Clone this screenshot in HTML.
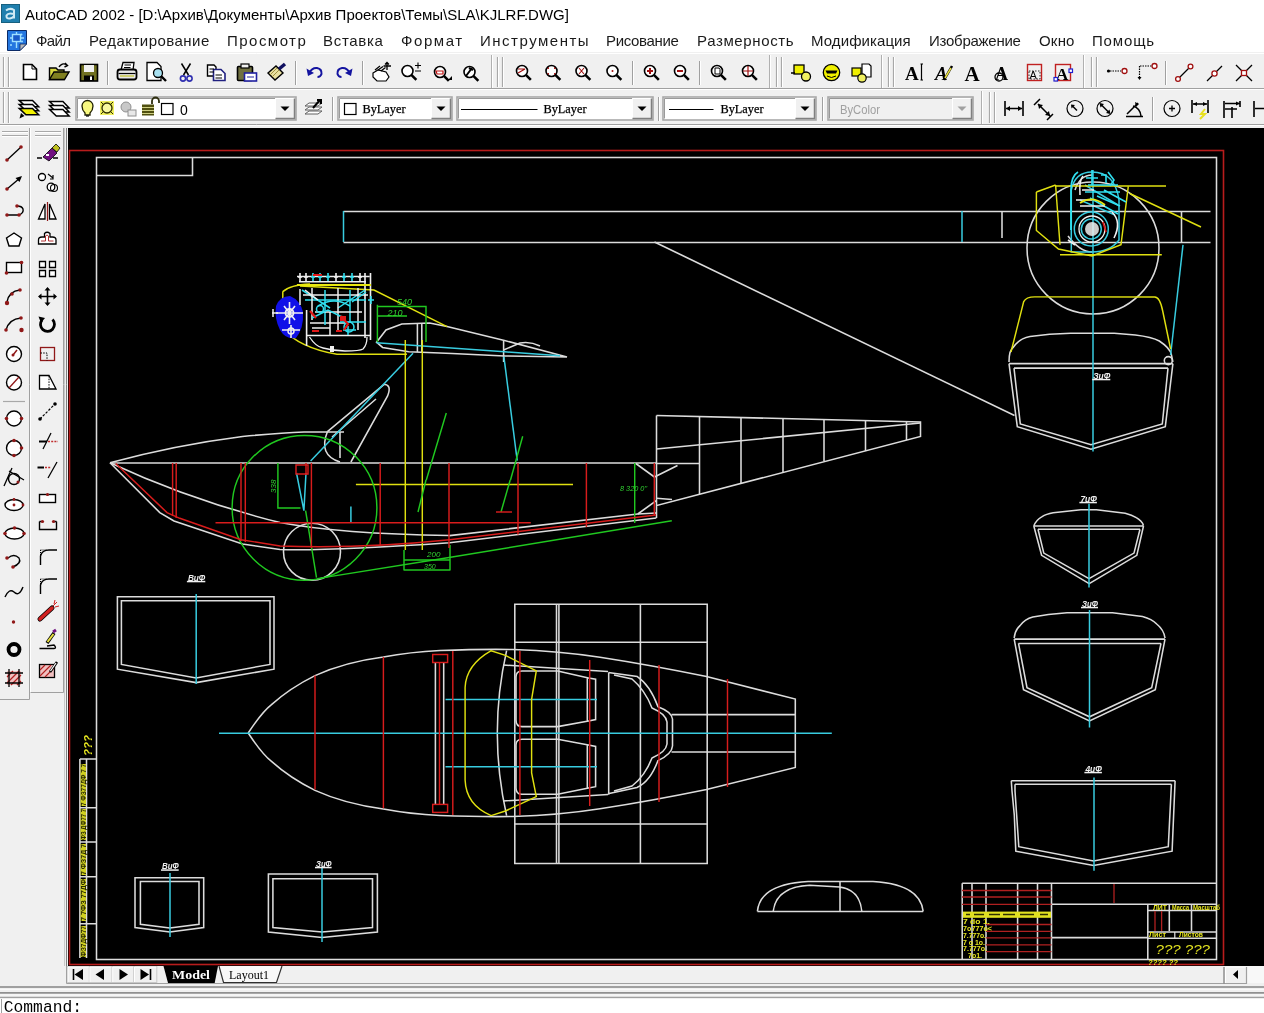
<!DOCTYPE html>
<html><head><meta charset="utf-8">
<style>
html,body{margin:0;padding:0;width:1264px;height:1013px;overflow:hidden;background:#f0f0f0;font-family:"Liberation Sans",sans-serif;position:relative;}
.a{position:absolute;}
svg{will-change:transform;}
#title{left:0;top:0;width:1264px;height:28px;background:#fff;}
#menu{left:0;top:28px;width:1264px;height:24px;background:#fff;}
#draw{left:68px;top:128px;width:1196px;height:838px;background:#000;}
#cmd{left:0;top:998px;width:1264px;height:15px;background:#fff;}
.ttl{font-size:15px;color:#000;white-space:nowrap;will-change:transform;}
.mn{font-size:15px;color:#1a1a1a;white-space:nowrap;will-change:transform;}
</style></head><body>
<div id="title" class="a">
  <svg class="a" style="left:1px;top:4px" width="19" height="19" viewBox="0 0 19 19"><rect x="0.5" y="0.5" width="18" height="18" fill="#1f7fae" stroke="#17607f" stroke-width="1"/><path d="M5 6.5 Q9 3.5 13 6 V14.5 M13 10 Q7 8.5 5.5 11.5 Q5 15 9 14.5 Q12 14 13 12" fill="none" stroke="#cfeaf5" stroke-width="2"/></svg>
  <div class="a ttl" style="left:25px;top:6px;">AutoCAD 2002 - [D:\Архив\Документы\Архив Проектов\Темы\SLA\KJLRF.DWG]</div>
</div>
<div id="menu" class="a">
  <svg class="a" style="left:7px;top:2px" width="20" height="21" viewBox="0 0 20 21"><path d="M0.5 0.5 H19.5 V14 L13 20.5 H0.5 Z" fill="#2477e0" stroke="#0b2a66" stroke-width="1"/><path d="M13 20.5 V14 H19.5 Z" fill="#b8b8b8" stroke="#0b2a66" stroke-width="0.8"/><path d="M3 8 H17 M9.5 2 V18" stroke="#9fe0ff" stroke-width="1.4"/><rect x="5.5" y="4.5" width="8" height="7" fill="#1a5ac8" stroke="#9fe0ff" stroke-width="1.4"/><circle cx="14.5" cy="4.5" r="1" fill="#9fe0ff"/><circle cx="4" cy="15" r="1" fill="#9fe0ff"/><circle cx="15" cy="11.5" r="1" fill="#9fe0ff"/></svg>
  <div class="a mn" style="left:36px;top:4px;letter-spacing:-0.6px;">Файл</div>
  <div class="a mn" style="left:89px;top:4px;letter-spacing:0.46px;">Редактирование</div>
  <div class="a mn" style="left:227px;top:4px;letter-spacing:1.47px;">Просмотр</div>
  <div class="a mn" style="left:323px;top:4px;letter-spacing:0.7px;">Вставка</div>
  <div class="a mn" style="left:401px;top:4px;letter-spacing:1.58px;">Формат</div>
  <div class="a mn" style="left:480px;top:4px;letter-spacing:1.51px;">Инструменты</div>
  <div class="a mn" style="left:606px;top:4px;letter-spacing:-0.34px;">Рисование</div>
  <div class="a mn" style="left:697px;top:4px;letter-spacing:0.62px;">Размерность</div>
  <div class="a mn" style="left:811px;top:4px;letter-spacing:0.08px;">Модификация</div>
  <div class="a mn" style="left:929px;top:4px;letter-spacing:-0.26px;">Изображение</div>
  <div class="a mn" style="left:1039px;top:4px;letter-spacing:0.2px;">Окно</div>
  <div class="a mn" style="left:1092px;top:4px;letter-spacing:0.84px;">Помощь</div>
</div>
<div class="a" style="left:0;top:52px;width:1264px;height:1px;background:#d8d8d8;"></div>
<svg class="a" style="left:0px;top:52px" width="1264" height="76" viewBox="0 52 1264 76">
<rect x="0" y="52" width="1264" height="76" fill="#f0f0f0"/>
<path d="M0 53.5 H1264" stroke="#ffffff" stroke-width="1"/>
<path d="M0 88.5 H1264" stroke="#a0a0a0" stroke-width="1"/>
<path d="M0 89.5 H1264" stroke="#ffffff" stroke-width="1"/>
<path d="M0 124.5 H1264" stroke="#a0a0a0" stroke-width="1"/>
<path d="M0 125.5 H1264" stroke="#ffffff" stroke-width="1"/>
<path d="M3.5 57 V87 M8.5 57 V87" stroke="#a8a8a8" stroke-width="1.2"/><path d="M4.5 57 V87 M9.5 57 V87" stroke="#ffffff" stroke-width="1"/>
<path d="M497.5 57 V87 M502.5 57 V87" stroke="#a8a8a8" stroke-width="1.2"/><path d="M498.5 57 V87 M503.5 57 V87" stroke="#ffffff" stroke-width="1"/>
<path d="M776.5 57 V87 M781.5 57 V87" stroke="#a8a8a8" stroke-width="1.2"/><path d="M777.5 57 V87 M782.5 57 V87" stroke="#ffffff" stroke-width="1"/>
<path d="M888.5 57 V87 M893.5 57 V87" stroke="#a8a8a8" stroke-width="1.2"/><path d="M889.5 57 V87 M894.5 57 V87" stroke="#ffffff" stroke-width="1"/>
<path d="M1091.5 57 V87 M1096.5 57 V87" stroke="#a8a8a8" stroke-width="1.2"/><path d="M1092.5 57 V87 M1097.5 57 V87" stroke="#ffffff" stroke-width="1"/>
<path d="M491.5 55 V88" stroke="#b0b0b0" stroke-width="1"/><path d="M492.5 55 V88" stroke="#ffffff" stroke-width="1"/>
<path d="M769.5 55 V88" stroke="#b0b0b0" stroke-width="1"/><path d="M770.5 55 V88" stroke="#ffffff" stroke-width="1"/>
<path d="M881.5 55 V88" stroke="#b0b0b0" stroke-width="1"/><path d="M882.5 55 V88" stroke="#ffffff" stroke-width="1"/>
<path d="M1083.5 55 V88" stroke="#b0b0b0" stroke-width="1"/><path d="M1084.5 55 V88" stroke="#ffffff" stroke-width="1"/>
<path d="M107.5 61 V85" stroke="#a0a0a0" stroke-width="1"/><path d="M108.5 61 V85" stroke="#ffffff" stroke-width="1"/>
<path d="M295.5 61 V85" stroke="#a0a0a0" stroke-width="1"/><path d="M296.5 61 V85" stroke="#ffffff" stroke-width="1"/>
<path d="M362.5 61 V85" stroke="#a0a0a0" stroke-width="1"/><path d="M363.5 61 V85" stroke="#ffffff" stroke-width="1"/>
<path d="M632.5 61 V85" stroke="#a0a0a0" stroke-width="1"/><path d="M633.5 61 V85" stroke="#ffffff" stroke-width="1"/>
<path d="M699.5 61 V85" stroke="#a0a0a0" stroke-width="1"/><path d="M700.5 61 V85" stroke="#ffffff" stroke-width="1"/>
<path d="M1165.5 61 V85" stroke="#a0a0a0" stroke-width="1"/><path d="M1166.5 61 V85" stroke="#ffffff" stroke-width="1"/>
<path d="M3.5 92 V123 M8.5 92 V123" stroke="#a8a8a8" stroke-width="1.2"/><path d="M4.5 92 V123 M9.5 92 V123" stroke="#ffffff" stroke-width="1"/>
<path d="M989.5 92 V123 M994.5 92 V123" stroke="#a8a8a8" stroke-width="1.2"/><path d="M990.5 92 V123 M995.5 92 V123" stroke="#ffffff" stroke-width="1"/>
<path d="M981.5 91 V124" stroke="#b0b0b0" stroke-width="1"/><path d="M982.5 91 V124" stroke="#ffffff" stroke-width="1"/>
<path d="M332.5 97 V121" stroke="#a0a0a0" stroke-width="1"/><path d="M333.5 97 V121" stroke="#ffffff" stroke-width="1"/>
<path d="M658.5 97 V121" stroke="#a0a0a0" stroke-width="1"/><path d="M659.5 97 V121" stroke="#ffffff" stroke-width="1"/>
<path d="M822.5 97 V121" stroke="#a0a0a0" stroke-width="1"/><path d="M823.5 97 V121" stroke="#ffffff" stroke-width="1"/>
<path d="M1152.5 97 V121" stroke="#a0a0a0" stroke-width="1"/><path d="M1153.5 97 V121" stroke="#ffffff" stroke-width="1"/>
<path d="M23.5 64.5 H32 L36.5 69 V79.5 H23.5 Z" fill="#fff" stroke="#000" stroke-width="1.6"/><path d="M32 64.5 V69 H36.5" fill="none" stroke="#000" stroke-width="1"/>
<path d="M49.5 68 H56 L58 70 H64 V79.5 H49.5 Z" fill="#d8d840" stroke="#000" stroke-width="1.4"/><path d="M49.5 79.5 L54 72 H69 L64.5 79.5 Z" fill="#808020" stroke="#000" stroke-width="1.4"/><path d="M59 67 Q62 62 67 65 M65 63 L67.5 65.5 L64.5 67" fill="none" stroke="#000" stroke-width="1.4"/>
<rect x="80.5" y="64.5" width="17" height="16.5" fill="#707020" stroke="#000" stroke-width="1.6"/><rect x="84" y="65" width="10" height="7" fill="#f0f0f0"/><rect x="84" y="75.5" width="10" height="5.5" fill="#000"/><rect x="90" y="76.5" width="2" height="3.5" fill="#fff"/>
<path d="M121 70 L123 62.5 H134 L133 70" fill="#fff" stroke="#000" stroke-width="1.3"/><path d="M124.5 65 H131 M124 67.5 H130.5" stroke="#000" stroke-width="1"/><rect x="117.5" y="69.5" width="19" height="10" rx="2.5" fill="#e8e8e8" stroke="#000" stroke-width="1.8"/><path d="M118.5 73.5 H135.5" stroke="#000" stroke-width="1.2"/><path d="M120 76 H134" stroke="#c8c840" stroke-width="1.4"/>
<path d="M147 62.5 H157 L161 66.5 V80.5 H147 Z" fill="#fff" stroke="#000" stroke-width="1.3"/><circle cx="158" cy="73" r="4.5" fill="#a8e0f0" stroke="#000" stroke-width="1.3"/><path d="M161 76 L166 81" stroke="#000" stroke-width="2.4"/>
<path d="M181.5 63.5 L188.5 75 M190.5 63.5 L183.5 75" stroke="#000" stroke-width="1.5" fill="none"/><circle cx="183" cy="78.5" r="2.6" fill="none" stroke="#3030b0" stroke-width="1.6"/><circle cx="189.5" cy="78.5" r="2.6" fill="none" stroke="#3030b0" stroke-width="1.6"/>
<path d="M207.5 65 H214 L216 67 V76 H207.5 Z" fill="#fff" stroke="#000" stroke-width="1.4"/><path d="M213.5 69.5 H221 L225 73.5 V80.5 H213.5 Z" fill="#fff" stroke="#202080" stroke-width="1.6"/><path d="M209.5 69 H214 M209.5 72 H214 M215.5 75 H222 M215.5 78 H222" stroke="#000" stroke-width="1"/>
<rect x="237.5" y="66.5" width="15" height="14" rx="1" fill="#707040" stroke="#000" stroke-width="1.6"/><rect x="241" y="64" width="8" height="4" fill="#f0f0f0" stroke="#000" stroke-width="1.2"/><rect x="244.5" y="73" width="12" height="8" fill="#fff" stroke="#2020a0" stroke-width="1.6"/><path d="M247 77 H254" stroke="#2020a0" stroke-width="1"/>
<path d="M268 73 L276 66 L283 73 L275 80 Z" fill="#e8e0a0" stroke="#000" stroke-width="1.4"/><path d="M279 69 L285 64" stroke="#101060" stroke-width="3.5"/><path d="M270 75 L277 68 M272 77 L279 70" stroke="#a09040" stroke-width="1"/>
<path d="M309 73 Q312 67.5 317 68 Q322 69 321.5 74 Q320.5 77 317.5 77" fill="none" stroke="#1414a0" stroke-width="2"/><path d="M306.5 68.5 L308 76 L314 73 Z" fill="#1414a0"/>
<path d="M350 73 Q347 67.5 342 68 Q337 69 337.5 74 Q338.5 77 341.5 77" fill="none" stroke="#1414a0" stroke-width="2"/><path d="M352.5 68.5 L351 76 L345 73 Z" fill="#1414a0"/>
<path d="M373 73 L378 70 L386 72 L389 77 L386 81 L377 81 L373 77 Z" fill="#fff" stroke="#000" stroke-width="1.2"/><path d="M375 70 L380 66 M378 70 L383 66.5 M381 71 L385.5 67.5" stroke="#000" stroke-width="1.2"/><path d="M387 62.5 V70 M383.5 66 H391 M385 64.5 L387 62.5 L389 64.5" stroke="#000" stroke-width="1.3" fill="none"/>
<circle cx="407.5" cy="71" r="5.5" fill="#fff" stroke="#000" stroke-width="1.6"/><path d="M411.35 74.85 L416.35 79.85" stroke="#000" stroke-width="2.6"/><path d="M415 65.5 H421 M418 62.5 V68.5 M415 71 H421" stroke="#000" stroke-width="1.1"/>
<circle cx="440" cy="72" r="5.5" fill="#fff" stroke="#000" stroke-width="1.6"/><path d="M443.85 75.85 L448.85 80.85" stroke="#000" stroke-width="2.6"/><path d="M436 71 H443 V74 H437 Z" fill="none" stroke="#c01010" stroke-width="1.2"/><path d="M448 80 L452 80 L452 76 Z" fill="#000"/>
<circle cx="469.5" cy="72" r="5.5" fill="#fff" stroke="#000" stroke-width="1.6"/><path d="M473.35 75.85 L478.35 80.85" stroke="#000" stroke-width="2.6"/><path d="M466 76 L472 68 M469 68 L473 70" stroke="#000" stroke-width="2"/>
<circle cx="522" cy="71" r="5.5" fill="#fff" stroke="#000" stroke-width="1.6"/><path d="M525.85 74.85 L530.85 79.85" stroke="#000" stroke-width="2.6"/><path d="M518 73 L525 69 M518 69 H525" stroke="#a01010" stroke-width="1.2"/>
<circle cx="551.5" cy="71" r="5.5" fill="#fff" stroke="#000" stroke-width="1.6"/><path d="M555.35 74.85 L560.35 79.85" stroke="#000" stroke-width="2.6"/><path d="M548 68 L549 68 M555 68 L554 68 M548 74 H549 M555 74 H554 M548 68 V69 M555 68 V69 M548 74 V73 M555 74 V73" stroke="#a01010" stroke-width="1.3"/>
<circle cx="581.5" cy="71" r="5.5" fill="#fff" stroke="#000" stroke-width="1.6"/><path d="M585.35 74.85 L590.35 79.85" stroke="#000" stroke-width="2.6"/><path d="M579 68 L584 74 M584 68 L579 74" stroke="#a01010" stroke-width="1.1"/>
<circle cx="612.5" cy="71" r="5.5" fill="#fff" stroke="#000" stroke-width="1.6"/><path d="M616.35 74.85 L621.35 79.85" stroke="#000" stroke-width="2.6"/><circle cx="612.5" cy="71" r="1" fill="#a01010"/>
<circle cx="650" cy="71" r="5.5" fill="#fff" stroke="#000" stroke-width="1.6"/><path d="M653.85 74.85 L658.85 79.85" stroke="#000" stroke-width="2.6"/><path d="M647 71 H653 M650 68 V74" stroke="#a01010" stroke-width="2"/>
<circle cx="680" cy="71" r="5.5" fill="#fff" stroke="#000" stroke-width="1.6"/><path d="M683.85 74.85 L688.85 79.85" stroke="#000" stroke-width="2.6"/><path d="M677 71 H683" stroke="#a01010" stroke-width="2"/>
<circle cx="717" cy="71" r="5.5" fill="#fff" stroke="#000" stroke-width="1.6"/><path d="M720.85 74.85 L725.85 79.85" stroke="#000" stroke-width="2.6"/><path d="M715 68 H719 L720 69.5 V74 H715 Z" fill="none" stroke="#000" stroke-width="1"/>
<circle cx="748" cy="71" r="5.5" fill="#fff" stroke="#000" stroke-width="1.6"/><path d="M751.85 74.85 L756.85 79.85" stroke="#000" stroke-width="2.6"/><path d="M743 71 H753 M748 66 V76" stroke="#a01010" stroke-width="1.2"/>
<rect x="794" y="65" width="10" height="9" fill="#f0f000" stroke="#000" stroke-width="1.3"/><circle cx="806" cy="76.5" r="4.5" fill="#f0f060" stroke="#000" stroke-width="1.3"/><path d="M791 73 H795" stroke="#000" stroke-width="1.5"/>
<circle cx="831.5" cy="72.5" r="8.2" fill="#f0f000" stroke="#000" stroke-width="1.3"/><path d="M825.5 70.5 H837.5 L836 73.5 H827 Z" fill="#000"/><path d="M827 76 Q831.5 79 836 76" stroke="#000" stroke-width="1" fill="none"/>
<path d="M862 64 H869 L871 66 V77 H862 Z" fill="#fff" stroke="#000" stroke-width="1.2"/><rect x="852" y="68" width="9" height="8" fill="#f0f000" stroke="#000" stroke-width="1.2"/><circle cx="862" cy="78" r="4.2" fill="#f0f060" stroke="#000" stroke-width="1.2"/>
<text x="905" y="80" font-family="Liberation Serif" font-weight="bold" font-size="19" fill="#000">A</text><path d="M920.5 64 H923 M921.5 64 V80 M920.5 80 H923" stroke="#000" stroke-width="1.2"/>
<text x="935" y="80" font-family="Liberation Serif" font-weight="bold" font-style="italic" font-size="19" fill="#000">A</text><path d="M944 80 L952 66" stroke="#000" stroke-width="2.5"/><path d="M945 78 L951 68" stroke="#e8e040" stroke-width="1.5"/>
<text x="964.5" y="81" font-family="Liberation Serif" font-weight="bold" font-size="21" fill="#000">A</text>
<text x="995" y="80" font-family="Liberation Serif" font-weight="bold" font-size="18" fill="#000">A</text><circle cx="999" cy="77" r="4" fill="none" stroke="#000" stroke-width="1.3"/>
<rect x="1027.5" y="64.5" width="14" height="16" fill="none" stroke="#c02020" stroke-width="1.4"/><text x="1029.5" y="79" font-family="Liberation Sans" font-size="11" fill="#000">A</text><path d="M1029 71 H1040 V79 H1029 Z" fill="none" stroke="#000" stroke-width="0.8" stroke-dasharray="1.5 1.5"/>
<rect x="1055.5" y="64.5" width="15" height="16" fill="none" stroke="#c02020" stroke-width="1.4"/><text x="1056" y="79.5" font-family="Liberation Serif" font-weight="bold" font-size="17" fill="#000">A</text><rect x="1054" y="77.5" width="3.5" height="3.5" fill="#fff" stroke="#2020d0" stroke-width="1.2"/><rect x="1069" y="69" width="3.5" height="3.5" fill="#fff" stroke="#2020d0" stroke-width="1.2"/>
<circle cx="1108.5" cy="71" r="1.6" fill="#000"/><path d="M1110 71 H1121" stroke="#000" stroke-width="1.2" stroke-dasharray="1.5 1"/><circle cx="1124.5" cy="71" r="2.5" fill="#fff" stroke="#a01010" stroke-width="1.3"/>
<path d="M1139.5 66 V79" stroke="#000" stroke-width="1.2" stroke-dasharray="1.5 1"/><path d="M1140 66 H1152" stroke="#000" stroke-width="1.2" stroke-dasharray="1.5 1"/><path d="M1137.5 77 L1139.5 80 L1141.5 77 Z" fill="#000"/><circle cx="1154.5" cy="66" r="2.5" fill="#fff" stroke="#a01010" stroke-width="1.3"/>
<path d="M1178 79 L1191 66" stroke="#000" stroke-width="1.3"/><circle cx="1178" cy="79" r="2.4" fill="#fff" stroke="#a01010" stroke-width="1.3"/><circle cx="1190.5" cy="66.5" r="2.4" fill="#fff" stroke="#a01010" stroke-width="1.3"/>
<path d="M1207 81 L1222 66" stroke="#000" stroke-width="1.3"/><circle cx="1214.5" cy="73.5" r="2.6" fill="#fff" stroke="#a01010" stroke-width="1.3"/>
<path d="M1236 65 L1252 81 M1252 65 L1236 81" stroke="#000" stroke-width="1.3"/><rect x="1241.5" y="70.5" width="5" height="5" fill="#fff" stroke="#a01010" stroke-width="1.3"/>
<path d="M19.2 100.4 H32.5 L38.7 106.80000000000001 H25.9 Z" fill="#fff" stroke="#000" stroke-width="1.5" stroke-linejoin="miter"/><path d="M19.2 104.4 H32.5 L38.7 110.80000000000001 H25.9 Z" fill="#fff" stroke="#000" stroke-width="1.5" stroke-linejoin="miter"/><path d="M19.2 108.4 H32.5 L38.7 114.80000000000001 H25.9 Z" fill="#f0f000" stroke="#000" stroke-width="1.5" stroke-linejoin="miter"/><path d="M19.5 118.5 L21 113 L24.5 116 Z" fill="#000"/>
<path d="M49.6 101.6 H62.900000000000006 L69.1 108.0 H56.300000000000004 Z" fill="#fff" stroke="#000" stroke-width="1.5" stroke-linejoin="miter"/><path d="M49.6 105.6 H62.900000000000006 L69.1 112.0 H56.300000000000004 Z" fill="#fff" stroke="#000" stroke-width="1.5" stroke-linejoin="miter"/><path d="M49.6 109.6 H62.900000000000006 L69.1 116.0 H56.300000000000004 Z" fill="#fff" stroke="#000" stroke-width="1.5" stroke-linejoin="miter"/>
<rect x="76" y="97" width="220" height="23" fill="#fff" stroke="#a8a8a8" stroke-width="1.6"/><path d="M77.5 118.5 V98.5 H294.5" fill="none" stroke="#808080" stroke-width="0.8"/><rect x="275" y="98" width="20" height="21" fill="#f0f0f0"/><path d="M275.5 118.5 V98.5 H294.5" fill="none" stroke="#fff" stroke-width="1"/><path d="M275.5 118.5 H294.5 V98.5" fill="none" stroke="#808080" stroke-width="1.5"/><path d="M280.5 106.5 H289.5 L285.0 111.0 Z" fill="#000"/>
<path d="M85 113 Q82 110 82 106 A5.5 5.5 0 0 1 93 106 Q93 110 90 113 V115 H85 Z" fill="#f8f880" stroke="#202000" stroke-width="1.3"/><path d="M86 116 H89" stroke="#000" stroke-width="1.2"/>
<rect x="100" y="101" width="14" height="14" fill="#f0f060"/><circle cx="107" cy="108" r="5" fill="#f8f8a0" stroke="#303000" stroke-width="1.3"/><path d="M101 102 L103 104 M113 102 L111 104 M101 114 L103 112 M113 114 L111 112" stroke="#303000" stroke-width="1"/>
<circle cx="126" cy="107" r="5" fill="#c8c8c8" stroke="#909090" stroke-width="1"/><rect x="128" y="110" width="8" height="6" fill="#e8e8e8" stroke="#909090" stroke-width="1"/>
<path d="M152 104 V101 A3.5 3.5 0 0 1 159 101 V103" fill="none" stroke="#303010" stroke-width="1.8"/><rect x="142" y="104.5" width="12" height="11" fill="#505010"/><path d="M142 107.5 H154 M142 110.5 H154 M142 113.5 H154" stroke="#f0f0a0" stroke-width="0.8"/>
<rect x="161.5" y="103.5" width="11.5" height="11" fill="#fff" stroke="#000" stroke-width="1.2"/>
<text x="180" y="114.5" font-family="Liberation Sans" font-size="14" fill="#000">0</text>
<path d="M305 106 L309 103 H322 L318 106 Z M305 110 L309 107 H322 L318 110 Z M305 114 L309 111 H322 L318 114 Z" fill="#fff" stroke="#606060" stroke-width="1"/><path d="M313 108 L320 100 M317 100 H321 V104" stroke="#000" stroke-width="2" fill="none"/>
<rect x="338" y="97" width="114" height="23" fill="#fff" stroke="#a8a8a8" stroke-width="1.6"/><path d="M339.5 118.5 V98.5 H450.5" fill="none" stroke="#808080" stroke-width="0.8"/><rect x="431" y="98" width="20" height="21" fill="#f0f0f0"/><path d="M431.5 118.5 V98.5 H450.5" fill="none" stroke="#fff" stroke-width="1"/><path d="M431.5 118.5 H450.5 V98.5" fill="none" stroke="#808080" stroke-width="1.5"/><path d="M436.5 106.5 H445.5 L441.0 111.0 Z" fill="#000"/>
<rect x="344.5" y="103.5" width="11.5" height="11" fill="#fff" stroke="#000" stroke-width="1.2"/>
<text x="362.5" y="113" font-family="Liberation Serif" font-size="12.5" fill="#000" stroke="#000" stroke-width="0.25" textLength="43" lengthAdjust="spacingAndGlyphs">ByLayer</text>
<rect x="457" y="97" width="196" height="23" fill="#fff" stroke="#a8a8a8" stroke-width="1.6"/><path d="M458.5 118.5 V98.5 H651.5" fill="none" stroke="#808080" stroke-width="0.8"/><rect x="632" y="98" width="20" height="21" fill="#f0f0f0"/><path d="M632.5 118.5 V98.5 H651.5" fill="none" stroke="#fff" stroke-width="1"/><path d="M632.5 118.5 H651.5 V98.5" fill="none" stroke="#808080" stroke-width="1.5"/><path d="M637.5 106.5 H646.5 L642.0 111.0 Z" fill="#000"/>
<path d="M461 109.5 H537.5" stroke="#000" stroke-width="1.2"/>
<text x="543.5" y="113" font-family="Liberation Serif" font-size="12.5" fill="#000" stroke="#000" stroke-width="0.25" textLength="43" lengthAdjust="spacingAndGlyphs">ByLayer</text>
<rect x="663" y="97" width="153" height="23" fill="#fff" stroke="#a8a8a8" stroke-width="1.6"/><path d="M664.5 118.5 V98.5 H814.5" fill="none" stroke="#808080" stroke-width="0.8"/><rect x="795" y="98" width="20" height="21" fill="#f0f0f0"/><path d="M795.5 118.5 V98.5 H814.5" fill="none" stroke="#fff" stroke-width="1"/><path d="M795.5 118.5 H814.5 V98.5" fill="none" stroke="#808080" stroke-width="1.5"/><path d="M800.5 106.5 H809.5 L805.0 111.0 Z" fill="#000"/>
<path d="M669 109.5 H713.5" stroke="#000" stroke-width="1.2"/>
<text x="720.5" y="113" font-family="Liberation Serif" font-size="12.5" fill="#000" stroke="#000" stroke-width="0.25" textLength="43" lengthAdjust="spacingAndGlyphs">ByLayer</text>
<rect x="828" y="97" width="145" height="23" fill="#f0f0f0" stroke="#a8a8a8" stroke-width="1.6"/><path d="M829.5 118.5 V98.5 H971.5" fill="none" stroke="#808080" stroke-width="0.8"/><rect x="952" y="98" width="20" height="21" fill="#f0f0f0"/><path d="M952.5 118.5 V98.5 H971.5" fill="none" stroke="#fff" stroke-width="1"/><path d="M952.5 118.5 H971.5 V98.5" fill="none" stroke="#808080" stroke-width="1.5"/><path d="M957.5 106.5 H966.5 L962.0 111.0 Z" fill="#a0a0a0"/>
<text x="840" y="114" font-family="Liberation Sans" font-size="13" fill="#a0a0a0" textLength="40" lengthAdjust="spacingAndGlyphs">ByColor</text>
<path d="M1005 101 V116 M1023 101 V116 M1006 108.5 H1022" stroke="#000" stroke-width="1.6"/><path d="M1006 108.5 L1010 106 V111 Z M1022 108.5 L1018 106 V111 Z" fill="#000"/>
<path d="M1034 105 L1040 99 M1047 120 L1053 114 M1038 104 L1050 116" stroke="#000" stroke-width="1.5"/><path d="M1038 104 L1043 105 L1039 109 Z M1050 116 L1045 115 L1049 111 Z" fill="#000"/>
<circle cx="1075" cy="108.5" r="8" fill="none" stroke="#000" stroke-width="1.2"/><path d="M1072 105.5 L1077 110.5" stroke="#000" stroke-width="1.5"/><path d="M1071 104.5 L1075 105 L1071.5 108.5 Z" fill="#000"/>
<circle cx="1105" cy="108.5" r="8" fill="none" stroke="#000" stroke-width="1.2"/><path d="M1100.5 104 L1109.5 113" stroke="#000" stroke-width="1.5"/><path d="M1099.5 103 L1104 104 L1100.5 107.5 Z M1110.5 114 L1106 113 L1109.5 109.5 Z" fill="#000"/>
<path d="M1126 116.5 H1143 M1127 114 L1138 103 M1133 106 Q1140 108 1141 116" stroke="#000" stroke-width="1.5" fill="none"/><path d="M1139 104 L1135 102 L1136 107 Z" fill="#000"/>
<circle cx="1172" cy="108.5" r="8" fill="none" stroke="#000" stroke-width="1.2"/><path d="M1169 108.5 H1175 M1172 105.5 V111.5" stroke="#000" stroke-width="1.3"/>
<path d="M1192 100 V113 M1208 100 V113 M1193 104 H1207" stroke="#000" stroke-width="1.6"/><path d="M1193 104 L1197 102 V106 Z M1207 104 L1203 102 V106 Z" fill="#000"/><path d="M1205 109 L1201 114 H1205 L1200 119" stroke="#e8e020" stroke-width="2" fill="none"/>
<path d="M1224 101 V118 M1240 101 V107 M1225 103.5 H1240 M1225 109 H1237 M1232 107 V118" stroke="#000" stroke-width="1.6"/><path d="M1240 103.5 L1236 101.5 V105.5 Z" fill="#000"/>
<path d="M1254 101 V117 M1255 108.5 H1264" stroke="#000" stroke-width="1.6"/>
</svg><svg class="a" style="left:0px;top:128px" width="68" height="860" viewBox="0 128 68 860">
<rect x="0" y="128" width="68" height="860" fill="#f0f0f0"/>
<path d="M29.5 128 V699.5 M0 699.5 H29.5" stroke="#a0a0a0" stroke-width="1"/>
<path d="M30.5 128 V693" stroke="#ffffff" stroke-width="1"/>
<path d="M63.5 128 V692.5 M30.5 692.5 H63.5" stroke="#a0a0a0" stroke-width="1"/>
<path d="M64.5 128 V988" stroke="#c8c8c8" stroke-width="1"/><path d="M66.5 128 V966" stroke="#808080" stroke-width="1"/>
<path d="M2 131.5 H28 M2 135.5 H28 M35 131.5 H61 M35 135.5 H61" stroke="#a8a8a8" stroke-width="1.2"/>
<path d="M2 132.5 H28 M2 136.5 H28 M35 132.5 H61 M35 136.5 H61" stroke="#ffffff" stroke-width="1"/>
<path d="M3 401.5 H25" stroke="#a8a8a8" stroke-width="1.2"/>
<path d="M7 160 L21 147" stroke="#000" stroke-width="1.3"/><circle cx="7" cy="160" r="1.8" fill="#901818"/><circle cx="21" cy="147" r="1.8" fill="#901818"/>
<path d="M7 189 L20 178" stroke="#000" stroke-width="1.3"/><path d="M22 176 L15.5 178 L19.5 182 Z" fill="#000"/><circle cx="7" cy="189" r="1.8" fill="#901818"/>
<path d="M7 215 H19 Q24 213 23 209 Q22 206 17 206" stroke="#000" stroke-width="1.4" fill="none"/><circle cx="7" cy="215" r="1.8" fill="#901818"/><circle cx="19" cy="215" r="1.8" fill="#901818"/><circle cx="17" cy="206" r="1.8" fill="#901818"/>
<path d="M14 233 L21.5 238 L19 246 H9 L6.5 238 Z" fill="#fff" stroke="#000" stroke-width="1.4"/>
<rect x="6.5" y="262.5" width="15" height="10" fill="#fff" stroke="#000" stroke-width="1.4"/><circle cx="6.5" cy="273" r="1.8" fill="#901818"/><circle cx="21.5" cy="262.5" r="1.8" fill="#901818"/>
<path d="M7 302 Q9 291 20 290" stroke="#000" stroke-width="1.4" fill="none"/><circle cx="7" cy="303" r="2.2" fill="#901818"/><circle cx="12" cy="294" r="1.8" fill="#901818"/><circle cx="20" cy="290" r="1.8" fill="#901818"/>
<path d="M6 330 Q9 319 21 318" stroke="#000" stroke-width="1.4" fill="none"/><circle cx="6" cy="330" r="1.8" fill="#901818"/><circle cx="21" cy="318" r="1.8" fill="#901818"/><circle cx="21.5" cy="330" r="2.2" fill="#901818"/>
<circle cx="14" cy="354" r="7.5" fill="#fff" stroke="#000" stroke-width="1.4"/><path d="M13 355 L17 350" stroke="#901818" stroke-width="1.5"/><circle cx="13" cy="355" r="1.5" fill="#901818"/>
<circle cx="14" cy="382.5" r="7.5" fill="#fff" stroke="#000" stroke-width="1.4"/><path d="M9 388 L19 377" stroke="#901818" stroke-width="1.3"/>
<circle cx="14" cy="418.5" r="7.5" fill="#fff" stroke="#000" stroke-width="1.4"/><circle cx="6.5" cy="418.5" r="1.8" fill="#901818"/><circle cx="21.5" cy="418.5" r="1.8" fill="#901818"/>
<circle cx="14" cy="448" r="7.5" fill="#fff" stroke="#000" stroke-width="1.4"/><circle cx="14" cy="440.5" r="1.8" fill="#901818"/><circle cx="21.5" cy="448" r="1.8" fill="#901818"/><circle cx="14" cy="455.5" r="1.8" fill="#901818"/>
<circle cx="14" cy="479" r="5.5" fill="none" stroke="#000" stroke-width="1.4"/><path d="M4 486 L12 468 M9 471 L24 480" stroke="#000" stroke-width="1.3"/><circle cx="18" cy="482" r="1.5" fill="#901818"/>
<ellipse cx="14" cy="505" rx="9" ry="5.5" fill="#fff" stroke="#000" stroke-width="1.4"/><circle cx="14" cy="505" r="1.4" fill="#901818"/><circle cx="14" cy="499.5" r="1.4" fill="#901818"/><circle cx="23" cy="505" r="1.4" fill="#901818"/>
<ellipse cx="14.5" cy="533.5" rx="9.5" ry="5.5" fill="#fff" stroke="#000" stroke-width="1.4"/><circle cx="5" cy="533.5" r="1.8" fill="#901818"/><circle cx="14.5" cy="528" r="1.8" fill="#901818"/><circle cx="24" cy="533.5" r="1.8" fill="#901818"/>
<path d="M8 558 Q14 553 19 558 Q22 563 13 567" stroke="#000" stroke-width="1.4" fill="none"/><circle cx="7" cy="558" r="1.8" fill="#901818"/><circle cx="13" cy="567" r="1.8" fill="#901818"/>
<path d="M5 597 Q9 588 14 592 Q19 597 23 587" stroke="#000" stroke-width="1.4" fill="none"/>
<circle cx="13.5" cy="622" r="1.7" fill="#901818"/>
<circle cx="14" cy="649.5" r="5.5" fill="none" stroke="#000" stroke-width="3.8"/>
<rect x="7" y="671" width="14" height="14" fill="#f0c0c0"/><path d="M7 677 L13 671 M7 683 L19 671 M11 685 L21 675 M17 685 L21 681" stroke="#b02020" stroke-width="1.2"/><path d="M5 673 H23 M5 683 H23 M9 669 V687 M19 669 V687" stroke="#000" stroke-width="1.3"/>
<path d="M37 158 H58" stroke="#000" stroke-width="1.5" stroke-dasharray="5 11"/><path d="M43 157 L52 148 L57 153 L49 161 Z" fill="#701080" stroke="#000" stroke-width="0.8"/><path d="M52 148 L56 144 L60 148 L57 152 Z" fill="#c0c020" stroke="#000" stroke-width="0.8"/><rect x="46" y="154" width="3" height="2" fill="#fff"/>
<circle cx="42" cy="177" r="3.5" fill="#fff" stroke="#000" stroke-width="1.3"/><circle cx="51" cy="187" r="3.8" fill="#fff" stroke="#000" stroke-width="1.3"/><circle cx="54" cy="188" r="3.5" fill="none" stroke="#000" stroke-width="1.1"/><path d="M48 174 L53 178 M53 175 V179 H50" stroke="#000" stroke-width="1.2" fill="none"/>
<path d="M45 204 L38.5 219 H45 Z M49.5 204 L56 219 H49.5 Z" fill="#fff" stroke="#000" stroke-width="1.3"/><path d="M47.5 202 V221" stroke="#901818" stroke-width="1.2"/>
<path d="M38.5 244 V240 Q38.5 237 42 237 H44.5 V233.5 Q47 231 50 233.5 V237 H52.5 Q56 237 56 240 V244 Z" fill="#fff" stroke="#000" stroke-width="1.3"/><path d="M41 241 H45.5 V236 Q47 234 48.5 236 V241 H53.5" fill="none" stroke="#b03030" stroke-width="1"/>
<path d="M39.5 261.5 H45.5 V267.5 H39.5 Z M49.5 261.5 H55.5 V267.5 H49.5 Z M39.5 270.5 H45.5 V276.5 H39.5 Z M49.5 270.5 H55.5 V276.5 H49.5 Z" fill="#fff" stroke="#000" stroke-width="1.3"/>
<path d="M47.5 288.5 V304.5 M39.5 296.5 H55.5" stroke="#000" stroke-width="1.6"/><path d="M47.5 287 L44.5 290.5 H50.5 Z M47.5 306 L44.5 302.5 H50.5 Z M38 296.5 L41.5 293.5 V299.5 Z M57 296.5 L53.5 293.5 V299.5 Z" fill="#000"/>
<path d="M52.5 319.5 A7 7 0 1 1 42 320" stroke="#000" stroke-width="2.8" fill="none"/><path d="M38.5 316.5 L45 318 L41 323 Z" fill="#000"/>
<rect x="40.5" y="347.5" width="14" height="13" fill="none" stroke="#901818" stroke-width="1.3"/><path d="M40.5 353 H47 V360.5" stroke="#000" stroke-width="1" stroke-dasharray="1.5 1.2" fill="none"/>
<path d="M39.5 375.5 H49 L56 389 H39.5 Z" fill="#fff" stroke="#000" stroke-width="1.3"/><path d="M49 376 V389" stroke="#000" stroke-width="1" stroke-dasharray="1.5 1.2"/>
<path d="M40 419 L55 404" stroke="#000" stroke-width="1.2" stroke-dasharray="2.5 1.5"/><circle cx="40" cy="419" r="1.8" fill="#000"/><circle cx="55" cy="404" r="1.8" fill="#000"/>
<path d="M39 441.5 H47" stroke="#000" stroke-width="2"/><path d="M48 441.5 H58" stroke="#c03030" stroke-width="1.5" stroke-dasharray="2 1.2"/><path d="M43 449 L51 433" stroke="#000" stroke-width="1.3"/>
<path d="M37.5 467.5 H44" stroke="#000" stroke-width="2"/><path d="M45 467.5 H51" stroke="#c03030" stroke-width="1.5" stroke-dasharray="2 1.2"/><path d="M48 478 L57 462" stroke="#000" stroke-width="1.3"/>
<rect x="39.5" y="494.5" width="16" height="8" fill="#fff" stroke="#000" stroke-width="1.4"/><circle cx="47.5" cy="494.5" r="1.6" fill="#901818"/>
<path d="M39.5 521.5 V529.5 H56.5 V521.5" fill="none" stroke="#000" stroke-width="1.4"/><path d="M39.5 521.5 H42 M54 521.5 H56.5" stroke="#000" stroke-width="1.4"/><circle cx="42.5" cy="521.5" r="1.6" fill="#901818"/><circle cx="53.5" cy="521.5" r="1.6" fill="#901818"/>
<path d="M40.5 565 V556 Q42 550 49 550 H57" stroke="#000" stroke-width="1.4" fill="none"/><path d="M40.5 550 H47 M40.5 550 V556" stroke="#000" stroke-width="1" stroke-dasharray="1 1"/>
<path d="M40.5 594 V585 Q42 579 49 579 H57" stroke="#000" stroke-width="1.4" fill="none"/><path d="M40.5 579 H47 M40.5 579 V585" stroke="#000" stroke-width="1" stroke-dasharray="1 1"/>
<path d="M40 619 L52 608" stroke="#000" stroke-width="5" stroke-linecap="round"/><path d="M40 619 L52 608" stroke="#d02020" stroke-width="3.5" stroke-linecap="round"/><path d="M53 606 L57 602 M55 607 L59 606 M54 604 L55 600" stroke="#d02020" stroke-width="1"/>
<path d="M39.5 648.5 H54 Q57 648 54 645 L47 646" stroke="#000" stroke-width="1.3" fill="none"/><path d="M47 643 L54 633" stroke="#000" stroke-width="3.5"/><path d="M47.5 642 L53.5 634" stroke="#e8e040" stroke-width="2"/><path d="M53 632 L56 630" stroke="#701080" stroke-width="3"/>
<rect x="39.5" y="664.5" width="15" height="13" fill="#f0c0c0" stroke="#000" stroke-width="1.3"/><path d="M40 670 L45 665 M40 676 L51 665 M45 677 L54 668" stroke="#b02020" stroke-width="1.1"/><path d="M50 672 L57 662" stroke="#000" stroke-width="2.6"/><path d="M50.5 671 L56 663" stroke="#fff" stroke-width="1.2"/>
</svg><div id="draw" class="a"></div>
<svg class="a" style="left:0;top:0" width="1264" height="1013" viewBox="0 0 1264 1013">
<g fill="none" stroke="#b81c1c" stroke-width="1.6">
<rect x="69.5" y="150.5" width="1154" height="814"/>
</g>
<g fill="none" stroke="#dcdcdc" stroke-width="1.55">
<rect x="96.5" y="157.5" width="1120" height="802"/>
<path d="M96.5 175.5 H192.5 V157.5"/>
<path d="M343.5 211.5 H1210.5 M343.5 242.5 H1210.5"/>
<path d="M1002 211 V238 M1181.5 211 V242"/>
<path d="M654.5 242 L1014.5 415.5"/>
<!-- side hull -->
<path d="M111 463 H656.5"/>
<path d="M110 462.7 Q175 445 242.5 436.4 Q280 433 304 432 H344"/>
<path d="M110 462.7 L159.8 512.6 L174 521 L242.5 544 L280 549.6 Q330 551 449.5 542.8 L656.3 518"/>
<path d="M110 462.7 Q190 500 280 522.6 Q340 534 449.5 535.6 L637.8 514 L656.3 513"/>
<path d="M637.8 514 L656.3 500.6"/>
<!-- tail -->
<path d="M656.5 415.5 L920.5 422 V436.5 L656.5 505.5 V518"/>
<path d="M656.5 415.5 V505"/>
<path d="M656.5 449 L920.5 423"/>
<path d="M699.5 416.5 V494 M741 417.5 V483 M783 418.5 V472 M824 419.5 V461 M865.5 420.5 V451 M906.5 421.5 V440"/>
<path d="M656.5 463.5 H699.5"/>
<path d="M635.8 463.5 L654.4 477 L677.5 465.5 M656.5 498.2 L672 499.5"/>
<!-- pylon -->
<path d="M327.4 431.7 L384.2 384.3 Q392 385 387.6 396 L350.9 462"/>
<path d="M327.4 431.7 Q318 455 340 462 M332 437 L376 399"/>
<path d="M340 432 V458"/>
<!-- wing airfoil side -->
<path d="M376.5 342.2 L386 330 L401.8 324 L429.6 323 L447 326.6 L504.5 340.5 L567 357 L504.5 356 L452 353.5 L408.7 351.8 L382.6 347.4 Z"/>
<path d="M417.4 323 V352 M421.8 323 V352 M503.6 340 V362"/>
<path d="M503.6 350 L520 343 Q530 341 540 346"/>
<circle cx="312" cy="551.7" r="28.5"/>
<!-- engine block -->



<!-- front view -->
<circle cx="1093" cy="248" r="66"/>
<path d="M1009 362 Q1009 350 1013.5 347 Q1020 338 1030 336.5 L1049.6 334.3 L1070.6 333.2 H1114.2 L1135.3 335 Q1152 337 1159.3 341 Q1170 348 1171.4 354.6 L1172.9 362 M1009 363.6 H1172.9 M1014 368.1 H1168"/><circle cx="1168.3" cy="360.6" r="4"/>
<path d="M1009 363.6 L1017.3 426.7 L1091 449.3 L1165.3 426.7 L1172.9 363.6"/>
<path d="M1014 368.1 L1020.3 424 L1091 444.8 L1162.3 424 L1168 368.1"/>
<path d="M1075 190 Q1080 175 1092 175 M1068 236 Q1080 252 1092 252"/>
<!-- section 1 -->
<path d="M1033.8 526 Q1036 520 1042.1 516.6 Q1046 514 1053.2 512.7 L1080.9 509.7 H1096.4 L1125.2 513.3 Q1132 515 1136.3 517.7 Q1142 521 1143.5 525.4 M1033.8 526 H1143.5 M1038 529.3 H1140"/>
<path d="M1033.8 526 L1041.6 555.3 L1089.2 583.6 L1136.8 555.3 L1143.5 526"/>
<path d="M1038 529.3 L1043.8 553.1 L1089 578.6 L1134 553.1 L1140 529.3"/>
<!-- section 2 -->
<path d="M1014.2 638 Q1015 630 1020 625.6 Q1025 619 1032.8 617 L1048.4 614.5 L1067 612.8 H1112.5 L1142.5 616.4 Q1152 619 1156.7 624 Q1164 630 1165 638 M1014.2 639.1 H1165 M1018.5 643.4 H1161"/>
<path d="M1014.2 639.1 L1023.5 689.7 L1089.5 721 L1155.3 689.7 L1165 639.1"/>
<path d="M1018.5 643.4 L1027 687.6 L1089.5 716.8 L1151.7 687.6 L1161 643.4"/>
<!-- section 3 -->
<path d="M1011.3 780.8 H1175.1 M1011.3 780.8 L1012 791 L1014.3 815 L1015.8 851.2 L1093.6 865.4 L1172.1 851.2 L1175.1 780.8"/>
<path d="M1015 784.3 L1015 791 L1018.8 846.7 L1093.6 861 L1168.3 846.7 L1171.4 784.3 M1015 784.3 H1171.4"/>
<!-- left section box -->
<path d="M117.4 596.7 H274 V669.2 L196.2 682.6 L117.4 669.2 Z"/>
<path d="M121.4 600.8 H270 V664.4 L196.2 677.9 L121.4 664.4 Z"/>
<!-- small boxes -->
<path d="M135 877.7 H203.7 V927.5 L169.8 932 L135 927.5 Z M140.4 881.5 H199 V924.2 L169.8 928 L140.4 924.2 Z"/>
<path d="M268.4 874 H377.4 V932 L322 937.5 L268.4 932 Z M272.9 878.8 H372.5 V927.5 L322 932 L272.9 927.5 Z"/>
<!-- float -->
<path d="M757.4 911.4 H923.2 M757.4 911.4 Q760 884 808 881.4 H873 Q920 884 923.2 911.4"/>
<path d="M773.2 911.4 Q776 887 809.6 885.3 L839.7 887 Q860 890 861.8 911.4 M840 881 V911"/>
<!-- top view hull -->
<path d="M248.2 733 Q262 712 271.5 704.6 Q290 688 315 675.6 Q345 662 383.4 657 Q410 652 440 650.5 Q480 649 513 649.5 Q560 651 600 657.3 Q650 665 706.5 676.6 L795.3 699 V767.5 L706.5 789.4 Q650 801 600 808.7 Q560 815 513 816.5 Q480 817 440 815.5 Q410 814 383.4 809 Q345 804 315 790.4 Q290 778 271.5 761.4 Q262 754 248.2 733"/>
<path d="M514.8 604.2 H707.2 V863.4 H514.8 Z M514.8 642.2 H707.2 M514.8 824 H707.2"/>
<path d="M556.5 604 V863 M558.9 604 V863 M640.4 604 V863"/>
<path d="M435.4 662 V805 M443.7 662 V805"/>
<path d="M506.6 650.7 Q488 733 506.6 815.6"/>
<path d="M503 665 L608 671.5 M503 801 L608 794.5"/>
<path d="M522 671 H557.7 L588.5 678 L595.6 679.2 V719.5 L588.5 721 L557.7 726.6 H522 Q516 726.6 516 720 V677 Q516 671 522 671 M587.3 678 V721"/>
<path d="M522 739.2 H557.7 L588.5 745 L595.6 746.4 V786.7 L588.5 788 L557.7 794.3 H522 Q516 794.3 516 788 V745 Q516 739.2 522 739.2 M587.3 745 V788"/>
<path d="M608.7 673 V794.8 M608.3 672.5 L637.3 676.6 Q650 685 658 706.7 Q672 712 672.5 719 V746 Q672 754 658 760.6 Q650 782 637 787.5 L608 793.8"/>
<path d="M614 675 L632 679 Q645 690 652 708 Q666 714 667 722 V744 Q666 752 652 758 Q645 776 632 786 L614 791"/>
<path d="M671.5 714.6 H795 M671.5 751.9 H795"/>
<!-- left strip -->
<path d="M79.9 759 H96 M79.9 759 V958 M86.5 759 V958 M79.9 807.7 H96 M79.9 842 H96 M79.9 876.8 H96 M79.9 923.7 H96"/>
<!-- title block -->
<path d="M962.2 883.3 H1216 M962.2 883.3 V959 M972 883.3 V959 M986 883.3 V959 M1017.6 883.3 V959 M1037.5 883.3 V959 M1051.5 883.3 V959"/>
<path d="M1051.5 904.3 H1216 M1051.5 937.6 H1147.8 M1147.8 904.3 V959 M1169.3 904.3 V931 M1191.5 904.3 V931 M1147.8 910.5 H1216 M1147.8 932 H1216 M1147.8 938.2 H1216"/>
</g>
<g fill="none" stroke="#38cce0" stroke-width="1.5">
<path d="M343.5 211 V242"/>
<path d="M962 211 V242"/>
<path d="M1093 170 V451.6"/>
<path d="M1183 244.8 L1170.6 355"/>
<path d="M376.5 342.7 L504.5 351.8 L560 355.8"/>
<path d="M413 353.3 L310.6 461"/>
<path d="M503.9 356.6 L517.2 460.7"/>
<path d="M296.5 473 L303.9 510.6 L306 473"/>
<path d="M350.9 506.4 V522.3"/>
<path d="M1089 503.8 V587.5 M1089.5 610 V727.5 M1094 777.5 V870.7"/>
<path d="M196.2 594 V684 M170 873 V937 M322 868 V942"/>
<path d="M219 733.3 H831.8 M445.5 699.4 H597 M445.5 766.8 H597"/>
<circle cx="1091.3" cy="229" r="17"/>
<circle cx="1091.3" cy="229" r="10"/>
<path d="M1071.3 252 V190 Q1075 172 1092 172 Q1115 172 1119 200 V240 Q1110 252 1092 252 Z"/>
<path d="M1080 200 L1115 215 M1085 185 L1118 205"/>

</g>
<g fill="none" stroke="#e0e010" stroke-width="1.45">
<path d="M405.3 340 V550 M422.3 340 V550"/>
<path d="M355.9 484.4 H573"/>
<path d="M282.8 291.6 Q290 285 310 284 M300 286 L374 290 L447 326.6 M282.8 291.6 V329 Q300 348 337 354.3 H407"/>
<path d="M1036.4 192 V230.5 L1058.5 249 L1092 256 L1121 244.8 L1128.3 186.4 M1036.4 192 L1055.6 185"/>
<path d="M1055.6 185 L1060 244.8 M1055 186 H1166 M1060 254.7 H1161.8 M1129.7 193.5 L1201 227"/>
<path d="M1011 352 L1023.7 301.6 Q1026 297 1034.8 296.9 H1154.8 Q1160 297 1162.7 311 L1170.6 349"/>
<path d="M491.2 650.7 Q466 665 465.1 687.5 V780 Q466 805 491.2 815.6 L505.4 811 L536.3 796.7 L531.6 773 V699.3 L536.3 670.9 L505.4 655.4 Z"/>
</g>
<g fill="none" stroke="#20c820" stroke-width="1.45">
<circle cx="304.5" cy="507.8" r="72.4"/>
<path d="M317.3 578.6 L450.6 557.2 L671.8 520.7"/>
<path d="M446.3 413 L426.3 480 M418 512 L426 480"/>
<path d="M522.7 436.3 L510.5 480"/>
<path d="M510.2 480 L501 512"/>
<path d="M305.6 510.6 L316.5 577.7"/>
<path d="M377.4 342 V304.8 M377.4 306.5 H426 V342 M377.4 316 H407"/>
<path d="M404 550 V570.5 M450 545 V570.5 M404 560 H450 M404 570 H450"/>
<path d="M277.9 463 V508 H300.5"/>
<path d="M634.7 463 V523"/>
</g>
<g fill="none" stroke="#d81c1c" stroke-width="1.45">
<path d="M115.7 463.4 L167 512.6 L179.8 518.3 L241 539.7 L280 546 Q360 549 449.5 539.7 L656 515"/>
<path d="M215.5 522.8 H530.8"/>
<path d="M172.6 463 V516 M176.2 463 V518 M241 463 V541 M245.3 463 V542 M311.4 463 V548 M380.2 463 V546 M449 463 V548 M518 463 V534.5 M586.4 463 V527 M654.3 463 V515"/>
<path d="M315 675.6 V789.6 M383.4 657 V808.2 M452.8 651 V815 M519.9 651 V815 M589.7 660 V806 M659 665 V802 M727.5 679 V787"/>
<rect x="432.7" y="654.5" width="14.9" height="8"/>
<rect x="432.7" y="804.4" width="14.9" height="8"/>
<path d="M439.5 662 V805"/>
<path d="M496 512 H512"/>


<path d="M296 465 H308 V474 H296 Z M306 463 V475"/>

</g>
<path d="M962 890.5 H1051.5 M962 897 H1051.5 M962 904.3 H1051.5 M986 924.5 H1051.5 M986 931.4 H1051.5 M986 937.9 H1051.5 M986 944.8 H1051.5 M986 951.7 H1051.5 M1114 884 V903 M1155 911 V931 M1161.6 911 V931" fill="none" stroke="#b02020" stroke-width="1.3"/>
</svg>
<svg class="a" style="left:0;top:0" width="1264" height="1013" viewBox="0 0 1264 1013">
<path d="M290 296 Q300 300 303 312 Q304 328 296 338 Q286 340 280 330 Q274 318 276 306 Q280 296 290 296 Z" fill="#1010e8"/><path d="M276 313 H303 M289.5 302 V324 M284 306 L295 320 M295 306 L284 320 M282 330 H300 M291 325 V338" stroke="#f0f0f0" stroke-width="1.6" fill="none"/><circle cx="289.5" cy="313" r="4" fill="none" stroke="#f0f0f0" stroke-width="1.8"/><circle cx="291" cy="331" r="3" fill="none" stroke="#f0f0f0" stroke-width="1.5"/><path d="M272 313 H278 M273 309 V317" stroke="#f0f0f0" stroke-width="1.5"/><path d="M297 276.5 H369.5 M299 281.8 H366 M365 273 V338 M370.5 273 V340 M306.6 310 V346 M307 335.5 H370 M310 323 H345" stroke="#f0f0f0" stroke-width="1.6" fill="none"/><path d="M300 273 V281 M298 277 H302" stroke="#f0f0f0" stroke-width="1.6"/><path d="M306 273 V281 M304 277 H308" stroke="#f0f0f0" stroke-width="1.6"/><path d="M313 273 V281 M311 277 H315" stroke="#30e0f0" stroke-width="1.6"/><path d="M320 273 V281 M318 277 H322" stroke="#30e0f0" stroke-width="1.6"/><path d="M328 273 V281 M326 277 H330" stroke="#30e0f0" stroke-width="1.6"/><path d="M336 273 V281 M334 277 H338" stroke="#f0f0f0" stroke-width="1.6"/><path d="M344 273 V281 M342 277 H346" stroke="#30e0f0" stroke-width="1.6"/><path d="M352 273 V281 M350 277 H354" stroke="#30e0f0" stroke-width="1.6"/><path d="M360 273 V281 M358 277 H362" stroke="#f0f0f0" stroke-width="1.6"/><path d="M313 275 H322" stroke="#e01818" stroke-width="2"/><path d="M297 285 H371" stroke="#e8e810" stroke-width="2"/><path d="M302 290 L330 308" stroke="#30e0f0" stroke-width="1.5" fill="none"/><path d="M365 290 L338 308" stroke="#30e0f0" stroke-width="1.5" fill="none"/><path d="M303 295 H368" stroke="#f0f0f0" stroke-width="1.5" fill="none"/><path d="M305 300 H366" stroke="#30e0f0" stroke-width="1.5" fill="none"/><path d="M312 288 V320" stroke="#f0f0f0" stroke-width="1.5" fill="none"/><path d="M325 290 V325" stroke="#30e0f0" stroke-width="1.5" fill="none"/><path d="M338 288 V330" stroke="#f0f0f0" stroke-width="1.5" fill="none"/><path d="M350 290 V322" stroke="#30e0f0" stroke-width="1.5" fill="none"/><path d="M358 288 V330" stroke="#f0f0f0" stroke-width="1.5" fill="none"/><path d="M318 306 Q334 296 350 306" stroke="#30e0f0" stroke-width="1.5" fill="none"/><path d="M315 312 H362" stroke="#f0f0f0" stroke-width="1.5" fill="none"/><path d="M312 318 L328 310 L344 318" stroke="#30e0f0" stroke-width="1.5" fill="none"/><path d="M305 290 L318 300" stroke="#f0f0f0" stroke-width="1.5" fill="none"/><path d="M352 302 L366 292" stroke="#30e0f0" stroke-width="1.5" fill="none"/><path d="M330 312 V335" stroke="#f0f0f0" stroke-width="1.5" fill="none"/><path d="M340 322 H366" stroke="#30e0f0" stroke-width="1.5" fill="none"/><path d="M312 328 H330" stroke="#f0f0f0" stroke-width="1.5" fill="none"/><path d="M348 326 V335 M343 330 H356" stroke="#30e0f0" stroke-width="1.5" fill="none"/><path d="M300 289 V305" stroke="#f0f0f0" stroke-width="1.5" fill="none"/><path d="M368 300 H374 M371 296 V304" stroke="#30e0f0" stroke-width="1.5" fill="none"/><circle cx="349" cy="327" r="5" fill="none" stroke="#30e0f0" stroke-width="1.5"/><circle cx="320" cy="309" r="3.5" fill="none" stroke="#30e0f0" stroke-width="1.5"/><path d="M310 311 L316 318 M341 316 L348 324 L344 330 M312 331 H319 M336 331 H342" stroke="#e01818" stroke-width="2.2" fill="none"/><rect x="340" y="316" width="6" height="5" fill="#e01818"/><path d="M309.5 337 Q316 347 323 348 Q334 351 345 351 Q360 351 363 349 Q367 345 367 337" stroke="#f0f0f0" stroke-width="1.3" fill="none"/><rect x="330" y="346" width="4" height="6" fill="#f0f0f0"/>
<path d="M1078 172 Q1071 176 1071 190 V230" stroke="#30e0f0" stroke-width="1.8" fill="none"/><path d="M1083 176 Q1079 180 1080 195" stroke="#f0f0f0" stroke-width="1.5" fill="none"/><path d="M1092 170 V185 M1086 178 H1098 M1101 175 H1106 V183 M1108 172 L1114 180 L1110 186" stroke="#30e0f0" stroke-width="1.6" fill="none"/><path d="M1088 185 H1118 M1085 192 H1120 M1090 198 L1118 214 M1097 196 L1120 206 M1104 190 L1126 202" stroke="#30e0f0" stroke-width="1.6" fill="none"/><path d="M1082 190 H1094 M1076 200 H1092 M1080 206 H1105" stroke="#f0f0f0" stroke-width="1.4" fill="none"/><path d="M1080 203 Q1092 195 1105 205" stroke="#e8e810" stroke-width="1.8" fill="none"/><circle cx="1092" cy="229" r="7" fill="#f0f0f0" opacity="0.85"/><circle cx="1092" cy="229" r="13" fill="none" stroke="#f0f0f0" stroke-width="1.3"/><path d="M1103 222 L1106 232" stroke="#e01818" stroke-width="1.6"/><path d="M1068 240 L1075 245 M1112 212 Q1122 222 1114 238" stroke="#f0f0f0" stroke-width="1.6" fill="none"/>
</svg><svg class="a" style="left:0;top:0" width="1264" height="1013" viewBox="0 0 1264 1013">
<text x="1093.2" y="378.5" font-family="Liberation Sans" font-weight="bold" font-style="italic" font-size="8.5" fill="#f0f0f0" textLength="17.09999999999991" lengthAdjust="spacingAndGlyphs">ЗиФ</text><rect x="1092.2" y="378.8" width="18.09999999999991" height="1.5" fill="#f0f0f0"/>
<text x="1080.4" y="501.5" font-family="Liberation Sans" font-weight="bold" font-style="italic" font-size="8.5" fill="#f0f0f0" textLength="16.5" lengthAdjust="spacingAndGlyphs">7иФ</text><rect x="1079.4" y="501.8" width="17.5" height="1.5" fill="#f0f0f0"/>
<text x="1082" y="606.5" font-family="Liberation Sans" font-weight="bold" font-style="italic" font-size="8.5" fill="#f0f0f0" textLength="16" lengthAdjust="spacingAndGlyphs">ЗиФ</text><rect x="1081" y="606.8" width="17" height="1.5" fill="#f0f0f0"/>
<text x="1085.4" y="771.5" font-family="Liberation Sans" font-weight="bold" font-style="italic" font-size="8.5" fill="#f0f0f0" textLength="16.5" lengthAdjust="spacingAndGlyphs">4иФ</text><rect x="1084.4" y="771.8" width="17.5" height="1.5" fill="#f0f0f0"/>
<text x="187.9" y="580.5" font-family="Liberation Sans" font-weight="bold" font-style="italic" font-size="8.5" fill="#f0f0f0" textLength="17.400000000000006" lengthAdjust="spacingAndGlyphs">ВиФ</text><rect x="186.9" y="580.8" width="18.400000000000006" height="1.5" fill="#f0f0f0"/>
<text x="162" y="869.0" font-family="Liberation Sans" font-weight="bold" font-style="italic" font-size="8.5" fill="#f0f0f0" textLength="16.69999999999999" lengthAdjust="spacingAndGlyphs">ВиФ</text><rect x="161" y="869.3" width="17.69999999999999" height="1.5" fill="#f0f0f0"/>
<text x="316" y="866.5" font-family="Liberation Sans" font-weight="bold" font-style="italic" font-size="8.5" fill="#f0f0f0" textLength="15.600000000000023" lengthAdjust="spacingAndGlyphs">ЗиФ</text><rect x="315" y="866.8" width="16.600000000000023" height="1.5" fill="#f0f0f0"/>
<text x="397" y="305" font-family="Liberation Sans" font-style="italic" font-size="9" fill="#30d030">540</text>
<text x="387.5" y="316" font-family="Liberation Sans" font-style="italic" font-size="9" fill="#30d030">210</text>
<text x="0" y="0" font-family="Liberation Sans" font-style="italic" font-size="8" fill="#30d030" transform="translate(276,493) rotate(-90)">338</text>
<text x="427" y="557" font-family="Liberation Sans" font-style="italic" font-size="8" fill="#30d030">200</text>
<text x="424" y="569" font-family="Liberation Sans" font-style="italic" font-size="7" fill="#30d030">350</text>
<text x="620" y="491" font-family="Liberation Sans" font-style="italic" font-size="7" fill="#30d030" textLength="27" lengthAdjust="spacingAndGlyphs">8 320 0"</text>
<text x="0" y="0" font-family="Liberation Sans" font-weight="bold" font-style="italic" font-size="10" fill="#e8e820" transform="translate(91.5,756) rotate(-90)" textLength="21" lengthAdjust="spacingAndGlyphs">???</text>
<rect x="80.5" y="764" width="5.5" height="42" fill="#d0d020"/>
<text x="0" y="0" font-family="Liberation Sans" font-weight="bold" font-size="7" fill="#282800" transform="translate(85.5,806) rotate(-90)" textLength="42" lengthAdjust="spacingAndGlyphs">7 ФЗ77ДФ 7 7</text>
<rect x="80.5" y="809" width="5.5" height="31" fill="#d0d020"/>
<text x="0" y="0" font-family="Liberation Sans" font-weight="bold" font-size="7" fill="#282800" transform="translate(85.5,840) rotate(-90)" textLength="31" lengthAdjust="spacingAndGlyphs">ФЗ ДФ77 7</text>
<rect x="80.5" y="844" width="5.5" height="31" fill="#d0d020"/>
<text x="0" y="0" font-family="Liberation Sans" font-weight="bold" font-size="7" fill="#282800" transform="translate(85.5,875) rotate(-90)" textLength="31" lengthAdjust="spacingAndGlyphs">7 ФЗ7Д 7</text>
<rect x="80.5" y="879" width="5.5" height="42" fill="#d0d020"/>
<text x="0" y="0" font-family="Liberation Sans" font-weight="bold" font-size="7" fill="#282800" transform="translate(85.5,921) rotate(-90)" textLength="42" lengthAdjust="spacingAndGlyphs">7 7ФЗ 77ДФ</text>
<rect x="80.5" y="926" width="5.5" height="31" fill="#d0d020"/>
<text x="0" y="0" font-family="Liberation Sans" font-weight="bold" font-size="7" fill="#282800" transform="translate(85.5,957) rotate(-90)" textLength="31" lengthAdjust="spacingAndGlyphs">ФЗ7ДФ77</text>
<rect x="963" y="911.6" width="88" height="6.2" fill="#e0e020"/>
<path d="M966 914.5 H970 M974 914.5 H984 M989 914.5 H1000 M1003 914.5 H1015 M1020 914.5 H1034 M1040 914.5 H1048" stroke="#303000" stroke-width="1.3"/>
<text x="963" y="924" font-family="Liberation Sans" font-weight="bold" font-size="7" fill="#e8e820" textLength="27" lengthAdjust="spacingAndGlyphs">7 do 1.</text>
<text x="963" y="931" font-family="Liberation Sans" font-weight="bold" font-size="7" fill="#e8e820" textLength="29" lengthAdjust="spacingAndGlyphs">7o777o<</text>
<text x="963" y="937.5" font-family="Liberation Sans" font-weight="bold" font-size="7" fill="#e8e820" textLength="23" lengthAdjust="spacingAndGlyphs">7.777o.</text>
<text x="963" y="944.5" font-family="Liberation Sans" font-weight="bold" font-size="7" fill="#e8e820" textLength="22" lengthAdjust="spacingAndGlyphs">7 o 1o.</text>
<text x="963" y="951" font-family="Liberation Sans" font-weight="bold" font-size="7" fill="#e8e820" textLength="24" lengthAdjust="spacingAndGlyphs">7.777o.</text>
<text x="968" y="958" font-family="Liberation Sans" font-weight="bold" font-size="7" fill="#e8e820" textLength="14" lengthAdjust="spacingAndGlyphs">7o1.</text>
<text x="1153" y="910" font-family="Liberation Sans" font-weight="bold" font-size="6.5" fill="#e8e820" textLength="14" lengthAdjust="spacingAndGlyphs">ЛИТ</text>
<text x="1172" y="910" font-family="Liberation Sans" font-weight="bold" font-size="6.5" fill="#e8e820" textLength="17" lengthAdjust="spacingAndGlyphs">Масса</text>
<text x="1193" y="910" font-family="Liberation Sans" font-weight="bold" font-size="6.5" fill="#e8e820" textLength="27" lengthAdjust="spacingAndGlyphs">Масштаб</text>
<text x="1149" y="937" font-family="Liberation Sans" font-weight="bold" font-size="6.5" fill="#e8e820" textLength="17" lengthAdjust="spacingAndGlyphs">Лист</text>
<text x="1179" y="937" font-family="Liberation Sans" font-weight="bold" font-size="6.5" fill="#e8e820" textLength="24" lengthAdjust="spacingAndGlyphs">Листов</text>
<path d="M1174.8 932 V938.5" stroke="#e6e6e6" stroke-width="1.2"/>
<text x="1155.5" y="954" font-family="Liberation Sans" font-style="italic" font-size="13.5" fill="#e0e020" textLength="54.5" lengthAdjust="spacingAndGlyphs">??? ???</text>
<text x="1148" y="965" font-family="Liberation Sans" font-weight="bold" font-style="italic" font-size="7" fill="#e8e820" textLength="30" lengthAdjust="spacingAndGlyphs">???? ??</text>
</svg><svg class="a" style="left:0;top:966px" width="1264" height="47" viewBox="0 966 1264 47">
<rect x="0" y="966" width="1264" height="33" fill="#f0f0f0"/>
<rect x="1247" y="966" width="17" height="17" fill="#f8f8f8"/>
<path d="M66.5 966 V983.5 H1247" stroke="#a0a0a0" stroke-width="1" fill="none"/>
<rect x="67.6" y="966.5" width="21.80000000000001" height="16" fill="#f0f0f0" stroke="#c8c8c8" stroke-width="1"/>
<path d="M68.1 982 V967 H88.9" stroke="#fff" stroke-width="1" fill="none"/>
<rect x="89.4" y="966.5" width="22.799999999999997" height="16" fill="#f0f0f0" stroke="#c8c8c8" stroke-width="1"/>
<path d="M89.9 982 V967 H111.7" stroke="#fff" stroke-width="1" fill="none"/>
<rect x="112.2" y="966.5" width="21.799999999999997" height="16" fill="#f0f0f0" stroke="#c8c8c8" stroke-width="1"/>
<path d="M112.7 982 V967 H133.5" stroke="#fff" stroke-width="1" fill="none"/>
<rect x="134" y="966.5" width="22.80000000000001" height="16" fill="#f0f0f0" stroke="#c8c8c8" stroke-width="1"/>
<path d="M134.5 982 V967 H156.3" stroke="#fff" stroke-width="1" fill="none"/>
<path d="M73.5 969 V980" stroke="#000" stroke-width="1.6"/><path d="M83 969 V980 L74.5 974.5 Z" fill="#000"/>
<path d="M104 969 V980 L95.5 974.5 Z" fill="#000"/>
<path d="M119.5 969 V980 L128 974.5 Z" fill="#000"/>
<path d="M140.5 969 V980 L149 974.5 Z" fill="#000"/><path d="M150.5 969 V980" stroke="#000" stroke-width="1.6"/>
<path d="M163.5 966 L168 983 H214.7 L218 966 Z" fill="#000"/>
<text x="191" y="979" text-anchor="middle" font-family="Liberation Serif" font-weight="bold" font-size="13" fill="#fff" textLength="38" lengthAdjust="spacingAndGlyphs">Model</text>
<path d="M219 966 L223.5 982.5 H276.5 L282 966" fill="#f8f8f8" stroke="#303030" stroke-width="1.2"/>
<text x="249" y="979" text-anchor="middle" font-family="Liberation Serif" font-size="13" fill="#000" textLength="40" lengthAdjust="spacingAndGlyphs">Layout1</text>
<rect x="1225" y="966.5" width="21.5" height="16.5" fill="#f0f0f0"/><path d="M1225.5 983 V967 H1246.5" stroke="#fff" stroke-width="1" fill="none"/><path d="M1225.5 983.5 H1246.5 V967" stroke="#a0a0a0" stroke-width="1.2" fill="none"/><path d="M1224 967 V984" stroke="#909090" stroke-width="1.5"/>
<path d="M1238 970 V979 L1233 974.5 Z" fill="#000"/>
<path d="M0 987 H1264" stroke="#a0a0a0" stroke-width="1.8"/>
<path d="M0 989.5 H1264" stroke="#fafafa" stroke-width="1"/>
<path d="M0 992.8 H1264" stroke="#909090" stroke-width="1.8"/>
<path d="M0 995 H1264" stroke="#fafafa" stroke-width="1"/>
<path d="M0 997.6 H1264" stroke="#a0a0a0" stroke-width="1.5"/>
<rect x="0" y="998.5" width="1264" height="15" fill="#fff"/>
<path d="M1.5 999 V1013" stroke="#a0a0a0" stroke-width="1"/>
<text x="3.8" y="1012" font-family="Liberation Mono" font-size="16.3" fill="#000">Command:</text>
</svg></body></html>
